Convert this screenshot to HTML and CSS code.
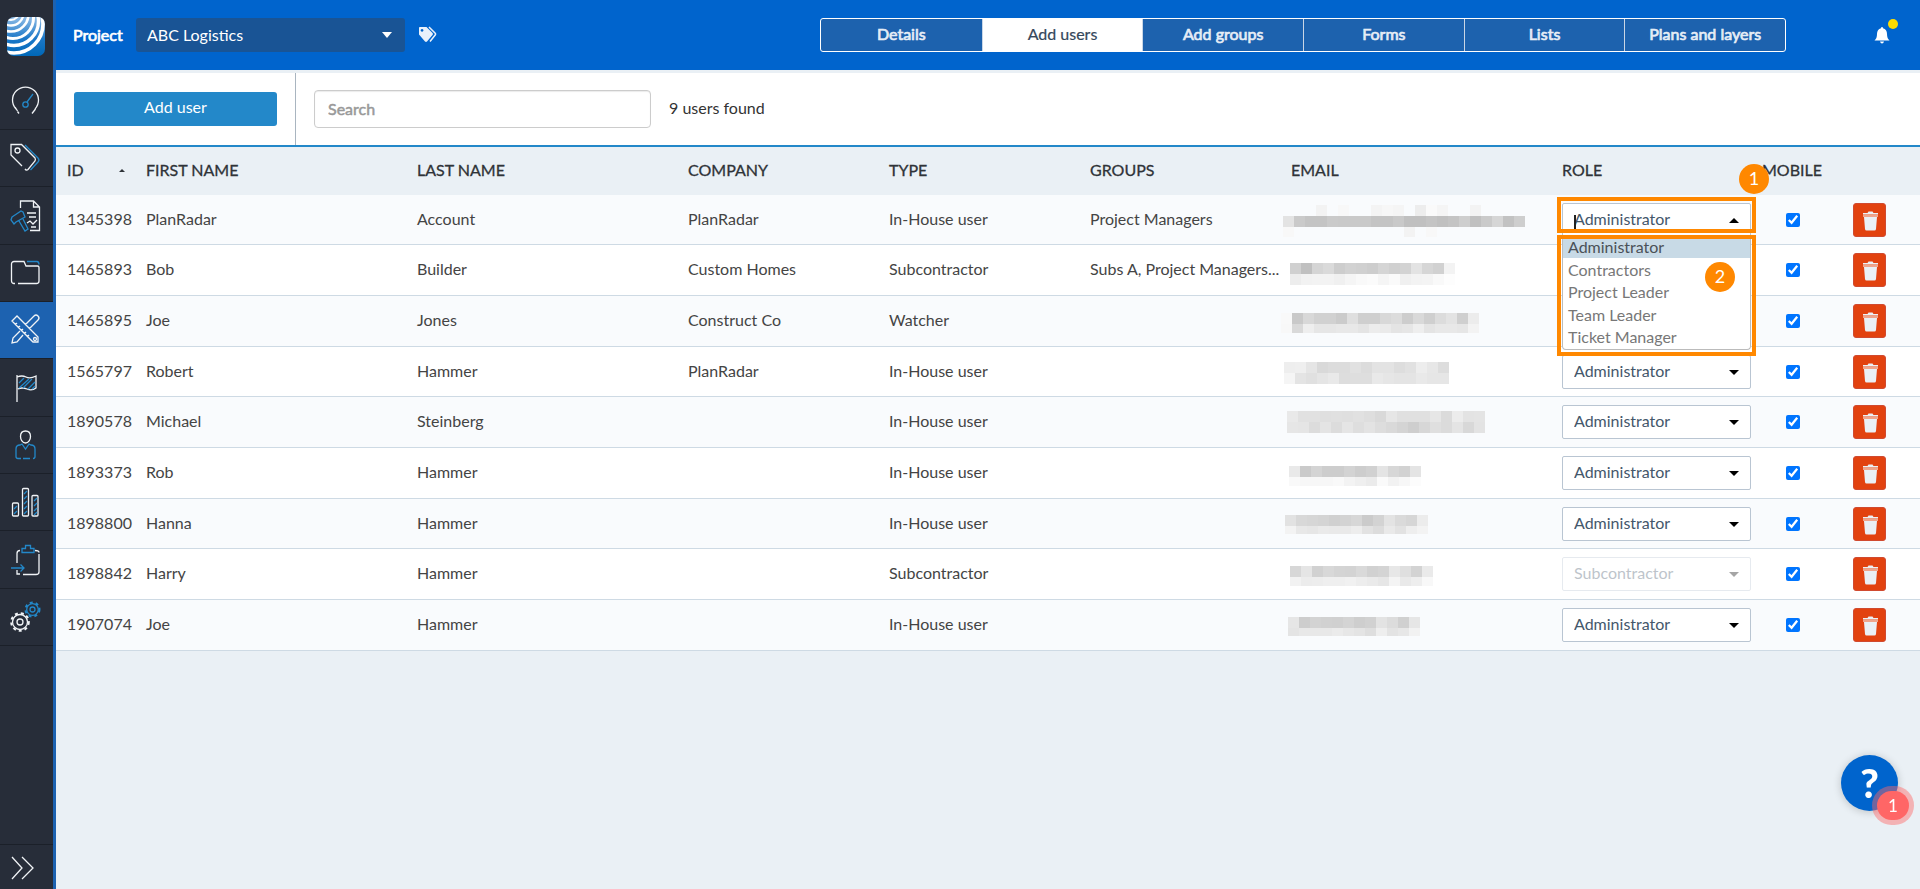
FILE: index.html
```html
<!DOCTYPE html>
<html lang="en">
<head>
    <meta charset="UTF-8">
    <meta name="viewport" content="width=device-width, initial-scale=1.0">
    <title>Project - Add users</title>
    <link rel="stylesheet" href="styles.css">
</head>
<body>

    <aside class="sidebar">
        <a class="logo" href="#" aria-label="Home">
            <svg width="38" height="39" viewBox="0 0 38 39">
                <defs>
                    <linearGradient id="logo-bg" x1="0" y1="0" x2="0" y2="1">
                        <stop offset="0" stop-color="#8fbce6"/>
                        <stop offset="0.55" stop-color="#1c78c8"/>
                        <stop offset="1" stop-color="#0068b8"/>
                    </linearGradient>
                    <clipPath id="logo-clip"><rect width="38" height="39" rx="7"/></clipPath>
                </defs>
                <g clip-path="url(#logo-clip)">
                    <rect width="38" height="39" fill="url(#logo-bg)"/>
                    <g fill="none" stroke="#fff">
                        <circle cx="4" cy="-5" r="8" stroke-width="2"/>
                        <circle cx="4" cy="-4" r="12.500" stroke-width="2.300"/>
                        <circle cx="4" cy="-3" r="17.500" stroke-width="2.600"/>
                        <circle cx="6" cy="1" r="20.500" stroke-width="3"/>
                        <circle cx="7" cy="4" r="24.500" stroke-width="3.400"/>
                        <circle cx="7" cy="7" r="29" stroke-width="3.600"/>
                    </g>
                </g>
            </svg>
        </a>
        <nav class="menu">
            <a href="#" aria-label="Dashboard">
                <svg width="34" height="34" viewBox="0 0 34 34">
                    <path d="M10 29.500l-1.500-2M24 29.500M7 25a13 13 0 1 1 19 0M6 23l2.500 4M26.500 25l-3.500 4.500"/>
                    <path class="accent" d="M18 18l6-8"/><circle class="accent" cx="16.500" cy="20.500" r="2.700"/>
                </svg>
            </a>
            <a href="#" aria-label="Tickets">
                <svg width="34" height="34" viewBox="0 0 34 34">
                    <path d="M13 25L2 14V3.500h10.500L26 17a3 3 0 0 1 0 3l-7 8.500c-1 1-2 .8-3-.5"/><circle cx="8.500" cy="9.500" r="2.500"/>
                    <path class="accent" d="M16 4l13 13a3 3 0 0 1 0 4l-7.500 8"/>
                </svg>
            </a>
            <a href="#" aria-label="Reports">
                <svg width="34" height="34" viewBox="0 0 34 34">
                    <path d="M11.500 9V2h13l6 6v23.500H21M24.500 2v6h6M18 14h9M20 18h7M18 24l3-2 3 3 4-4M22 28h5"/>
                    <path class="accent" d="M3 18l9-6 2 1 2 5-9 5-2 2-3-4zM10 22l6 10 3-2-5-10"/>
                </svg>
            </a>
            <a href="#" aria-label="Documents">
                <svg width="34" height="34" viewBox="0 0 34 34">
                    <path d="M6 27.500H5a2.500 2.500 0 0 1-2.500-2.500V8A2.500 2.500 0 0 1 5 5.500h10l2 4.500h11.500a1.500 1.500 0 0 1 1.500 1.500V25a2.500 2.500 0 0 1-2.500 2.500H9"/>
                    <path class="accent" d="M18 5.500h10q2 .2 2 3"/>
                </svg>
            </a>
            <a class="active" href="#" aria-label="Settings">
                <svg width="34" height="34" viewBox="0 0 34 34">
                    <path d="M3 8l5-5 21 21v5h-5zM6 12l2-2M9 15l2-2M12 18l2-2M15 21l2-2M18 24l2-2M14 22l-6 7-5 1 1-5 7-7M16 12l9-9q2-2 4 0t0 4l-9 9"/>
                    <circle cx="26" cy="26" r="1.500"/>
                </svg>
            </a>
            <a href="#" aria-label="Projects">
                <svg width="34" height="34" viewBox="0 0 34 34">
                    <path d="M8 4v27M8 6q5-2 9 0t10-1v12q-4 3-9 1t-9 0"/>
                    <path class="accent" d="M10 12l5-5M10 17l10-9M14 17l9-9M19 18l7-7M23 18l3-3"/>
                </svg>
            </a>
            <a href="#" aria-label="Users">
                <svg width="34" height="34" viewBox="0 0 34 34">
                    <path d="M16.500 3c3.500 0 5 2.500 5 5.500s-2 6.500-5 6.500-5-3.500-5-6.500 1.500-5.500 5-5.500z"/>
                    <path class="accent" d="M14 30.500h7M12 30.500H9q-2 0-2-2V21q0-4 4-4l2-1 3.500 5 3.500-5 2 1q4 0 4 4v7.500q0 2-2 2"/>
                </svg>
            </a>
            <a href="#" aria-label="Statistics">
                <svg width="34" height="34" viewBox="0 0 34 34">
                    <rect x="3.500" y="18" width="6" height="13" rx="1"/><rect x="13.500" y="3.500" width="6" height="27.500" rx="1"/><rect x="23" y="10.500" width="6" height="20.500" rx="1"/>
                    <path class="accent" d="M5 24l3-3M5 29l3-3M15 9l3-3M15 14l3-3M15 19l3-3M15 24l3-3M15 29l3-3M25 16l3-3M25 21l3-3M25 26l3-3M25 30l3-3"/>
                </svg>
            </a>
            <a href="#" aria-label="Exports">
                <svg width="34" height="34" viewBox="0 0 34 34">
                    <path d="M11 7.500q-3 0-3 3V20M8 27v4h3M14 31.500h13q3 0 3-2.500V11M26 7.500q4 0 4 2"/>
                    <path class="accent" d="M13 9.500v-4h3.500v-3h5v3H25v4zM2 25h13M11.500 21.500L15 25l-3.500 3.500"/>
                </svg>
            </a>
            <a href="#" aria-label="Configuration">
                <svg width="34" height="34" viewBox="0 0 34 34">
                    <circle cx="11" cy="22" r="7.500"/><circle class="teeth" cx="11" cy="22" r="8.800"/><circle cx="11" cy="22" r="3"/>
                    <circle class="accent" cx="23.500" cy="9.500" r="5.800"/><circle class="accent teeth" cx="23.500" cy="9.500" r="7"/><circle class="accent" cx="23.500" cy="9.500" r="2.500"/>
                </svg>
            </a>
        </nav>
        <button class="expand" aria-label="Expand menu">
            <svg width="24" height="24" viewBox="0 0 24 24"><path d="M1 1l10 11L1 23M11 1l11 11-11 11"/></svg>
        </button>
    </aside>

    <div class="page">
        <header class="topbar">
            <label class="project-label" for="project">Project</label>
            <div class="project-select">
                <select id="project"><option>ABC Logistics</option></select>
            </div>
            <svg class="tags" width="19" height="18" viewBox="0 0 19 18">
                <path fill="#e9f1fb" fill-rule="evenodd" d="M1 1.500Q1 1 2 1h6.500l6 6q1 1 0 2l-5.500 6.500q-1 .8-2 0L1 8.500zM4 3a1.400 1.400 0 1 0 .1 0z"/>
                <path fill="none" stroke="#e9f1fb" stroke-width="1.500" d="M11 1l6 6q1 1 .2 2L12 15.500"/>
            </svg>
            <nav class="tabs">
                <a href="#">Details</a>
                <a class="active" href="#">Add users</a>
                <a href="#">Add groups</a>
                <a href="#">Forms</a>
                <a href="#">Lists</a>
                <a href="#">Plans and layers</a>
            </nav>
            <button class="bell" aria-label="Notifications">
                <svg width="16" height="18" viewBox="0 0 16 18"><path fill="#fff" d="M8 1q1 0 1 1.200Q13 3.500 13 8q0 4.500 2.500 6.500H.5Q3 12.500 3 8q0-4.500 4-5.800Q7 1 8 1zM6 15.500h4q-.5 2-2 2t-2-2z"/></svg>
            </button>
        </header>

        <div class="toolbar">
            <div class="toolbar-add"><button class="add-user">Add user</button></div>
            <input class="search" type="text" placeholder="Search" aria-label="Search">
            <span class="found">9 users found</span>
        </div>

        <table class="users">
            <colgroup>
                <col class="col-id"><col class="col-wide"><col class="col-wide"><col class="col-mid"><col class="col-mid"><col class="col-mid"><col class="col-wide"><col class="col-mid"><col class="col-mobile"><col class="col-delete">
            </colgroup>
            <thead>
                <tr>
                    <th><span class="sorted">ID</span></th>
                    <th>FIRST NAME</th>
                    <th>LAST NAME</th>
                    <th>COMPANY</th>
                    <th>TYPE</th>
                    <th>GROUPS</th>
                    <th>EMAIL</th>
                    <th>ROLE</th>
                    <th class="center">MOBILE</th>
                    <th></th>
                </tr>
            </thead>
            <tbody id="rows"></tbody>
        </table>
    </div>

    <button class="help" aria-label="Help">?<span class="help-count">1</span></button>

    <script src="script.js"></script>

</body>
</html>
```

FILE: styles.css
```css
* {
    box-sizing: border-box;
}
body {
    margin: 0;
    min-height: 100vh;
    display: flex;
    background: #eaf0f5;
    color: #444;
    font-family: Lato, "Liberation Sans", sans-serif;
    font-size: 16px;
    line-height: 20px;
}
a {
    color: inherit;
    text-decoration: none;
}
button,
input,
select {
    font: inherit;
    color: inherit;
}
button {
    padding: 0;
    border: none;
    cursor: pointer;
}

/* Sidebar */
.sidebar {
    flex: none;
    width: 56px;
    display: flex;
    flex-direction: column;
    background: #272d39;
    border-right: 3px solid #1d62b0;
}
.logo {
    height: 73px;
    padding: 17px 0 0 7px;
}
.logo svg {
    display: block;
}
.menu a {
    display: flex;
    align-items: center;
    height: 57px;
    padding-left: 9px;
    border-bottom: 1px solid #1b2029;
}
.menu a:nth-child(3n) {
    height: 58px;
}
.menu a.active {
    background: #1d62b0;
}
.menu svg,
.expand svg {
    fill: none;
    stroke: #f0f3f6;
    stroke-width: 1.3;
}
.menu .accent {
    stroke: #2388c9;
}
.menu .teeth {
    stroke-width: 2;
    stroke-dasharray: 3 3;
}
.expand {
    height: 45px;
    margin-top: auto;
    padding: 2px 0 0 11px;
    background: none;
    border-top: 1px solid #1b2029;
}
.expand svg {
    display: block;
}

/* Top bar */
.page {
    flex: 1;
    min-width: 0;
}
.topbar {
    display: flex;
    align-items: center;
    height: 73px;
    padding: 0 20px 0 17px;
    background: #0064cd;
    border-bottom: 3px solid #eaf0f5;
    color: #fff;
}
.project-label {
    width: 63px;
    -webkit-text-stroke: 0.7px;
}
.project-select {
    position: relative;
    width: 269px;
    margin-right: 13px;
}
.project-select select {
    display: block;
    width: 100%;
    height: 34px;
    padding: 0 11px;
    appearance: none;
    background: #195495;
    border: none;
    border-radius: 3px;
}
.project-select::after {
    content: "";
    position: absolute;
    top: 14px;
    right: 13px;
    border: 5px solid transparent;
    border-top: 6px solid #fff;
    border-bottom: none;
    pointer-events: none;
}
.tabs {
    display: grid;
    grid-template-columns: repeat(6, 1fr);
    width: 966px;
    margin-left: auto;
    border: 1px solid #fff;
    border-radius: 3px;
    background: #1d62ae;
    color: #e6edf6;
    text-align: center;
    -webkit-text-stroke: 0.7px;
}
.tabs a {
    padding: 5px 0 7px;
    border-left: 1px solid #c9d6e6;
}
.tabs a:first-child {
    border-left: none;
}
.tabs a.active {
    background: #fff;
    color: #34475b;
    -webkit-text-stroke: 0.2px;
}
.bell {
    position: relative;
    margin: 0 10px 0 88px;
    background: none;
}
.bell svg {
    display: block;
}
.bell::after {
    content: "";
    position: absolute;
    top: -7px;
    right: -8px;
    width: 10px;
    height: 10px;
    border-radius: 50%;
    background: #ffdc00;
}

/* Toolbar */
.toolbar {
    display: flex;
    align-items: center;
    gap: 18px;
    height: 74px;
    background: #fff;
    border-bottom: 2px solid #2388c9;
    color: #333;
}
.toolbar-add {
    align-self: stretch;
    padding: 19px 18px 0;
    border-right: 1px solid #a9b5c0;
}
.add-user {
    width: 203px;
    height: 34px;
    padding-bottom: 4px;
    background: #2388c9;
    border-radius: 3px;
    color: #fff;
}
.search {
    width: 337px;
    height: 38px;
    padding: 0 13px 2px;
    border: 1px solid #ccc;
    border-radius: 4px;
    box-shadow: inset 0 1px 1px rgba(0, 0, 0, 0.08);
}
.search::placeholder {
    color: #999;
    -webkit-text-stroke: 0.5px;
}
.found {
    padding-bottom: 2px;
}

/* Users table */
.users {
    width: 100%;
    table-layout: fixed;
    border-collapse: separate;
    border-spacing: 0;
}
.col-id {
    width: 79px;
}
.col-wide {
    width: 271px;
}
.col-mid {
    width: 201px;
}
.col-mobile {
    width: 81px;
}
.col-delete {
    width: 87px;
}
.users th,
.users td {
    padding: 0 1px 2px 11px;
    text-align: left;
    white-space: nowrap;
}
.users th {
    height: 48px;
    color: #2f3338;
    font-weight: normal;
    -webkit-text-stroke: 0.3px;
}
.users td {
    height: 51px;
    background: #fff;
    border-bottom: 1px solid #cedae4;
}
.users tr:nth-child(3n+1) td {
    height: 50px;
}
.users tr:nth-child(odd) td {
    background: #f9fbfd;
}
.users .center {
    padding-left: 0;
    text-align: center;
}
.users .email {
    padding: 0;
}
.users .role-cell {
    padding-bottom: 0;
}
.users .mobile-cell {
    padding: 0;
}
.users .delete-cell {
    padding: 0 0 0 20px;
}
.sorted {
    display: flex;
    align-items: center;
    justify-content: space-between;
    padding-right: 9px;
}
.sorted::after {
    content: "";
    border: 3px solid transparent;
    border-bottom-color: #2f3338;
    border-top: none;
}
.email svg,
.delete svg {
    display: block;
}
.users input {
    display: block;
    width: 14px;
    height: 14px;
    margin: 0 auto;
}
.delete {
    display: flex;
    align-items: center;
    justify-content: center;
    width: 33px;
    height: 34px;
    padding: 2px 0 0 2px;
    background: #e2420f;
    border: 1px solid #d04a30;
    border-radius: 3px;
}

/* Role drop-down */
.role {
    position: relative;
}
.role select {
    display: block;
    width: 100%;
    height: 34px;
    padding: 0 11px 2px;
    appearance: none;
    background: #fff;
    border: 1px solid #b9c5d2;
    border-radius: 2px;
    color: #44576b;
    opacity: 1;
}
.role::after {
    content: "";
    position: absolute;
    top: 15px;
    right: 12px;
    border: 5px solid transparent;
    border-top-color: #000;
    border-bottom: none;
    pointer-events: none;
}
.role.disabled {
    opacity: 0.35;
}
.role.open::after {
    border-top: none;
    border-bottom: 5px solid #000;
}
.caret {
    position: absolute;
    top: 12px;
    left: 12px;
    width: 2px;
    height: 14px;
    background: #222;
}
.role-menu {
    position: absolute;
    z-index: 1;
    top: 33px;
    left: 0;
    right: 0;
    margin: 0;
    padding: 0 0 1px;
    list-style: none;
    background: #fff;
    border: 1px solid #bbb;
    border-top: none;
    border-radius: 0 0 4px 4px;
    color: #777;
}
.role-menu li {
    padding-left: 5px;
    line-height: 22px;
}
.role-menu li:nth-child(even) {
    line-height: 23px;
}
.role-menu .selected {
    background: #c8dae6;
    color: #4b5157;
}

/* Numbered callouts */
.callout {
    position: absolute;
    z-index: 2;
    left: -5px;
    right: -5px;
    border: 4px solid #ff8800;
    pointer-events: none;
}
.callout-field {
    top: -6px;
    height: 36px;
}
.callout-menu {
    top: 32px;
    height: 121px;
}
.callout-number {
    position: absolute;
    width: 30px;
    height: 30px;
    border-radius: 50%;
    background: #ff8800;
    color: #fff;
    font-size: 18px;
    line-height: 29px;
    text-align: center;
}
.callout-field .callout-number {
    top: -37px;
    right: -17px;
}
.callout-menu .callout-number {
    top: 23px;
    right: 17px;
}

/* Help */
.help {
    position: fixed;
    right: 22px;
    bottom: 78px;
    width: 57px;
    height: 56px;
    border-radius: 50%;
    background: #0064cd;
    box-shadow: 0 1px 8px rgba(0, 0, 0, 0.2);
    color: #fff;
    font-size: 40px;
    font-weight: 900;
    line-height: 56px;
}
.help-count {
    position: absolute;
    top: 36px;
    left: 36px;
    width: 32px;
    height: 29px;
    border-radius: 15px;
    background: #ff6666;
    box-shadow: 0 0 0 5px rgba(255, 102, 102, 0.45);
    font-size: 17px;
    font-weight: normal;
    line-height: 29px;
}
```

FILE: script.js
```javascript
const BLOCK = 11;

// mask: x, y, height of the last line, then the grey of each block per line ("--" is empty)
const users = [
    { id: 1345398, first: "PlanRadar", last: "Account", company: "PlanRadar", type: "In-House user", groups: "Project Managers", role: "Administrator", open: true,
      mask: [3, 2, 11, "------f3--f8----f4f7f5--edfaf5----f3", "e3cac4c4cac9c9c9c4c4c9c0c0c4c0c4cec0cad6c2ce", "f8--------------------f3--f8"] },
    { id: 1465893, first: "Bob", last: "Builder", company: "Custom Homes", type: "Subcontractor", groups: "Subs A, Project Managers...", role: "Administrator",
      mask: [10, 10, 11, "d0c0d5dacdd2d0cdd5d0d3e3d6d1f3", "edf2f3f3f0f5f9fbf5faf0f3f4f9fd"] },
    { id: 1465895, first: "Joe", last: "Jones", company: "Construct Co", type: "Watcher", groups: "", role: "Administrator",
      mask: [1, 9, 9, "f9c9d8d1d1cbdfcfcfd8dccdd9cfdce3cfec", "f8d9eee6e6e8e8e4eceae4e6eee4e8e8e6f3"] },
    { id: 1565797, first: "Robert", last: "Hammer", company: "PlanRadar", type: "In-House user", groups: "", role: "Administrator",
      mask: [4, 7, 11, "eeefe5d9dcdce1dce3e3dde1ede7dd", "f5e4e0e5e9dddedee9e6e4e4e9e6e6"] },
    { id: 1890578, first: "Michael", last: "Steinberg", company: "", type: "In-House user", groups: "", role: "Administrator",
      mask: [7, 6, 11, "e9e1e1dfe0dfe1ded9e6e0e0e0e6dbece3e4", "e6e5dce4dce5dee3ddd9d4ced7dfdbe4d8e3"] },
    { id: 1893373, first: "Rob", last: "Hammer", company: "", type: "In-House user", groups: "", role: "Administrator",
      mask: [9, 10, 9, "e9cad4cdcdd3cdd1e4d7d2e4", "f9f7f7f7f9f3efebfaf2f7fc"] },
    { id: 1898800, first: "Hanna", last: "Hammer", company: "", type: "In-House user", groups: "", role: "Administrator",
      mask: [5, 8, 8, "e2d8d6d4d0d3d7cbd3e3dad6ec", "f3e8e6eae9e9ede2dce9e2eef3"] },
    { id: 1898842, first: "Harry", last: "Hammer", company: "", type: "Subcontractor", groups: "", role: "Subcontractor", disabled: true,
      mask: [10, 9, 9, "d7e5d1d8d4d3d9d1d4e7dfd3ea", "f2ecedefeff1edeae6f4e9eef8"] },
    { id: 1907074, first: "Joe", last: "Hammer", company: "", type: "In-House user", groups: "", role: "Administrator",
      mask: [8, 9, 8, "e6cdd3d1d0d4ced1e3dcd0e6", "e4e8e8e8ebe7e4deeee3e7f2"] }
];

const roles = ["Administrator", "Contractors", "Project Leader", "Team Leader", "Ticket Manager"];

function maskSvg([x, y, lastHeight, ...lines]) {
    let rects = "";
    lines.forEach((line, row) => {
        const height = row === lines.length - 1 ? lastHeight : BLOCK;
        line.match(/../g).forEach((grey, i) => {
            if (grey !== "--") {
                rects += `<rect x="${x + i * BLOCK}" y="${y + row * BLOCK}" width="${BLOCK}" height="${height}" fill="#${grey.repeat(3)}"/>`;
            }
        });
    });
    return `<svg width="250" height="34" viewBox="0 0 250 34" shape-rendering="crispEdges">${rects}</svg>`;
}

function roleSelect(user) {
    const state = user.open ? " open" : user.disabled ? " disabled" : "";
    let html = `<div class="role${state}"><select aria-label="Role of ${user.first} ${user.last}"${user.disabled ? " disabled" : ""}><option>${user.role}</option></select>`;
    if (user.open) {
        const items = roles.map(role => `<li${role === user.role ? ' class="selected"' : ""}>${role}</li>`).join("");
        html += `<span class="caret"></span><ul class="role-menu">${items}</ul>
            <div class="callout callout-field"><span class="callout-number">1</span></div>
            <div class="callout callout-menu"><span class="callout-number">2</span></div>`;
    }
    return html + "</div>";
}

const trash = `<svg width="17" height="20" viewBox="0 0 17 20">
    <path fill="#eaf0f5" d="M1 2h4.500l1-1.500h4L11.500 2H16v1.500H1zM2 6h13l-1 12q-.2 1.500-1.500 1.500h-8Q3.200 19.500 3 18z"/>
    <path fill="#f0a58c" d="M1 3.500h15V6H1z"/>
</svg>`;

document.getElementById("rows").innerHTML = users.map(user => `
    <tr>
        <td>${user.id}</td>
        <td>${user.first}</td>
        <td>${user.last}</td>
        <td>${user.company}</td>
        <td>${user.type}</td>
        <td>${user.groups}</td>
        <td class="email">${maskSvg(user.mask)}</td>
        <td class="role-cell">${roleSelect(user)}</td>
        <td class="mobile-cell"><input type="checkbox" checked aria-label="Mobile"></td>
        <td class="delete-cell"><button class="delete" aria-label="Delete">${trash}</button></td>
    </tr>`).join("");
```
